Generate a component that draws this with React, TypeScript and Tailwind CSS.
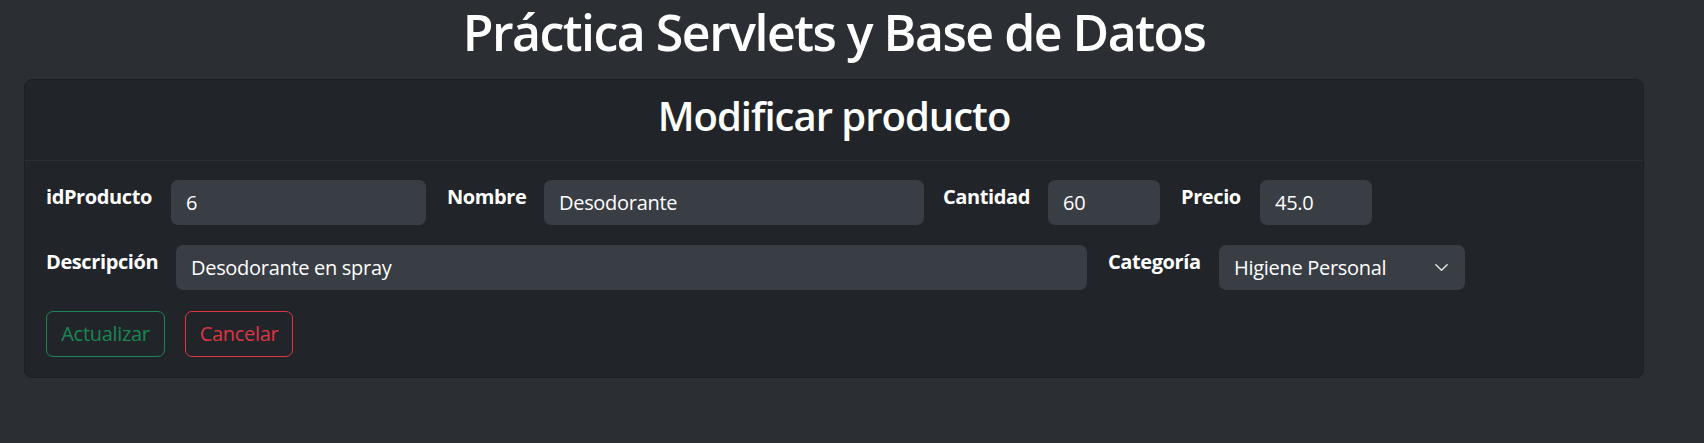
import React from "react";

const font = { fontFamily: '"Open Sans", "Noto Sans", sans-serif' };

function Label({ children, className }: { children: React.ReactNode; className: string }) {
  return (
    <div className={`shrink-0 pt-[2px] text-[20px] leading-[30px] font-bold text-white tracking-[-0.4px] ${className}`}>
      {children}
    </div>
  );
}

function Field({ value, className }: { value: string; className: string }) {
  return (
    <input
      readOnly
      defaultValue={value}
      className={`shrink-0 h-[45px] rounded-[7px] bg-[#393d44] px-[15px] text-[20px] leading-[30px] text-white outline-none tracking-[-0.3px] ${className}`}
    />
  );
}

export default function App() {
  return (
    <div className="min-h-[443px] w-full bg-[#2b2f34]" style={font}>
      <div className="ml-[24px] w-[1620px]">
        <h1 className="pt-[2px] text-center text-[50px] leading-[60px] font-semibold text-white tracking-[-1.5px] mb-[17px]">
          Práctica Servlets y Base de Datos
        </h1>
        <div className="rounded-[8px] border border-[#1c1f23] bg-[#212529]">
          <div className="pt-[12px] pb-[20px] border-b border-[#2c3035]">
            <h2 className="text-center text-[40px] leading-[48px] font-semibold text-white tracking-[-1px]">
              Modificar producto
            </h2>
          </div>
          <div className="pt-[19px] pb-[20px] pl-[21px] flex flex-col gap-[20px]">
            <div className="flex items-start">
              <Label className="w-[125px]">idProducto</Label>
              <Field value="6" className="w-[255px]" />
              <Label className="ml-[21px] w-[97px]">Nombre</Label>
              <Field value="Desodorante" className="w-[380px]" />
              <Label className="ml-[19px] w-[105px]">Cantidad</Label>
              <Field value="60" className="w-[112px]" />
              <Label className="ml-[21px] w-[79px]">Precio</Label>
              <Field value="45.0" className="w-[112px]" />
            </div>
            <div className="flex items-start">
              <Label className="w-[130px]">Descripción</Label>
              <Field value="Desodorante en spray" className="w-[911px]" />
              <Label className="ml-[21px] w-[111px]">Categoría</Label>
              <div className="relative shrink-0 w-[246px] h-[45px] rounded-[7px] bg-[#393d44] flex items-center px-[15px]">
                <span className="text-[20px] leading-[30px] text-white tracking-[-0.3px]">Higiene Personal</span>
                <svg
                  className="absolute right-[16px] top-[15px]"
                  width="15"
                  height="15"
                  viewBox="0 0 16 16"
                  fill="none"
                  stroke="#dee2e6"
                  strokeWidth="1.6"
                  strokeLinecap="round"
                  strokeLinejoin="round"
                >
                  <path d="M2 5l6 6 6-6" />
                </svg>
              </div>
            </div>
            <div className="flex items-start gap-[20px] mt-[1px]">
              <button className="w-[119px] h-[46px] rounded-[7px] border border-[#198754] text-[#198754] text-[20px] leading-[30px] tracking-[-0.3px]">
                Actualizar
              </button>
              <button className="w-[108px] h-[46px] rounded-[7px] border border-[#dc3545] text-[#dc3545] text-[20px] leading-[30px] tracking-[-0.3px]">
                Cancelar
              </button>
            </div>
          </div>
        </div>
      </div>
    </div>
  );
}
